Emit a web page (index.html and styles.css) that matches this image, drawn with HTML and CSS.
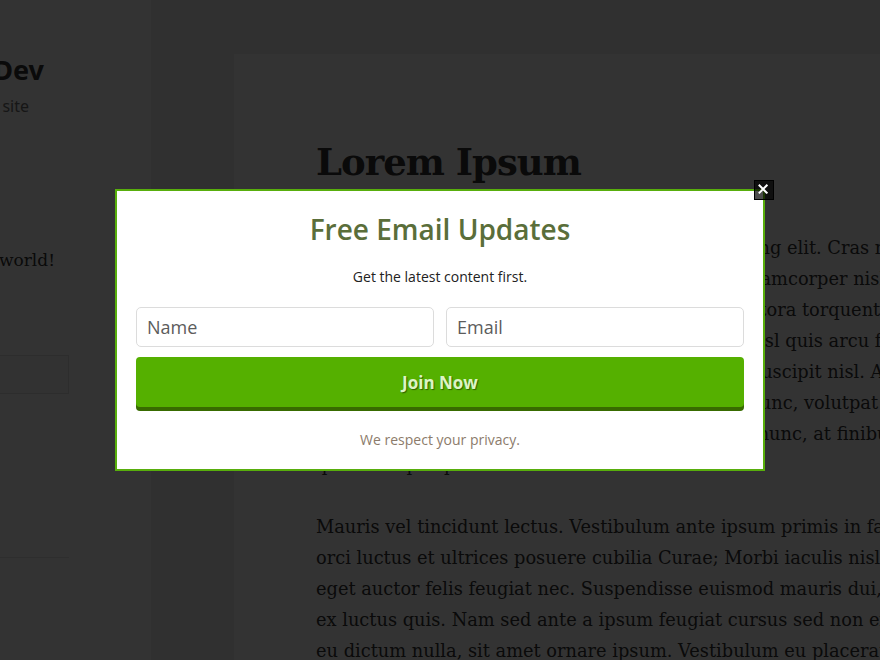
FILE: index.html
```html
<!DOCTYPE html>
<html lang="en">
<head>
<meta charset="utf-8">
<title>Lorem Ipsum</title>
<link rel="stylesheet" href="styles.css">
</head>
<body>
<div class="page">
  <aside class="sidebar">
    <div class="side-inner">
      <div class="end-row title-row"><span class="site-title">WordPress Dev</span></div>
      <div class="end-row desc-row"><span class="site-desc">Just another WordPress site</span></div>
      <div class="end-row post-row"><span class="post-link">Hello world!</span></div>
      <div class="search-box"></div>
      <div class="widget-rule"></div>
    </div>
  </aside>
  <main class="main">
    <article class="card">
      <h1 class="entry-title">Lorem Ipsum</h1>
      <p class="para">Lorem ipsum dolor sit amet, consectetur adipiscing elit. Cras nec<br>tellus in magnam facilisis tempus, Etiam vitae ullamcorper nisl quis<br>Nullam facilisis. Class aptent taciti sociosqu ad litora torquent per conubia<br>posuere dolore. Phasellus vitae est in justo non nisl quis arcu felis<br>ligula et orci. Pellentesque habitant morbi vitae suscipit nisl. Aliquam<br>vel lacus sed sapien viverra tristique, ornare at nunc, volutpat<br>dignissim est. Proin a magna sed metus porta et nunc, at finibus<br>quam tempus pharetra.</p>
      <p class="para">Mauris vel tincidunt lectus. Vestibulum ante ipsum primis in faucibus<br>orci luctus et ultrices posuere cubilia Curae; Morbi iaculis nisl et<br>eget auctor felis feugiat nec. Suspendisse euismod mauris dui, at<br>ex luctus quis. Nam sed ante a ipsum feugiat cursus sed non ex<br>eu dictum nulla, sit amet ornare ipsum. Vestibulum eu placerat</p>
    </article>
  </main>
</div>
<div class="overlay">
  <div class="modal">
    <button class="close" type="button" aria-label="Close">
      <svg viewBox="0 0 20 20" width="18" height="18"><path d="M5 5 L13 13 M13 5 L5 13" stroke="#fff" stroke-width="2.2" stroke-linecap="square" fill="none"/></svg>
    </button>
    <h2 class="modal-title">Free Email Updates</h2>
    <p class="modal-sub">Get the latest content first.</p>
    <form class="signup">
      <div class="fields">
        <input class="field" type="text" placeholder="Name">
        <input class="field" type="email" placeholder="Email">
      </div>
      <button class="join" type="button">Join Now</button>
    </form>
    <p class="privacy">We respect your privacy.</p>
  </div>
</div>
</body>
</html>
```
FILE: styles.css
```css
html, body {
  margin: 0;
  padding: 0;
  height: 100%;
  overflow: hidden;
}
body {
  background: #f1f1f1;
  color: #333;
  font-family: "DejaVu Serif", "Liberation Serif", serif;
}
.page {
  display: flex;
  min-height: 100vh;
}
.sidebar {
  width: 151px;
  flex-shrink: 0;
  background: #fff;
  overflow: hidden;
  min-height: 100vh;
}
.side-inner {
  width: 69px;
  padding-top: 53px;
}
.end-row {
  display: flex;
  justify-content: flex-end;
  white-space: nowrap;
}
.end-row > span { flex-shrink: 0; }
.title-row { padding-right: 25px; }
.desc-row { padding-right: 40px; margin-top: 9px; }
.post-row { padding-right: 14px; margin-top: 131px; }
.site-title {
  font-family: "Noto Sans", sans-serif;
  font-weight: 700;
  font-size: 27px;
  line-height: 33px;
  color: #333;
}
.site-desc {
  font-family: "Noto Sans", sans-serif;
  font-size: 16px;
  line-height: 22px;
  color: #707070;
}
.post-link {
  font-size: 17px;
  line-height: 24px;
  color: #333;
}
.search-box {
  margin-top: 83px;
  margin-left: -30px;
  height: 39px;
  box-sizing: border-box;
  background: #f7f7f7;
  border: 1px solid rgba(51, 51, 51, 0.12);
}
.widget-rule {
  margin-top: 163px;
  border-top: 1px solid rgba(51, 51, 51, 0.12);
}
.main {
  flex: 1;
  min-width: 0;
  padding: 54px 0 0 83px;
}
.card {
  background: #fff;
  overflow: hidden;
  padding: 85px 0 0 82px;
  min-height: 700px;
  white-space: nowrap;
}
.entry-title {
  margin: 0;
  font-size: 37px;
  line-height: 46px;
  letter-spacing: -1px;
  font-weight: 700;
  color: #333;
}
.para {
  margin: 47px 0 0;
  font-size: 17.8px;
  line-height: 31px;
}
.para + .para { margin-top: 31px; }

.overlay {
  position: fixed;
  inset: 0;
  background: rgba(0, 0, 0, 0.8);
  display: flex;
  align-items: center;
  justify-content: center;
}
.modal {
  position: relative;
  width: 650px;
  box-sizing: border-box;
  background: #fff;
  border: 2px solid #58ae0c;
  padding: 19px 19px 20px;
  font-family: "Open Sans", sans-serif;
  text-align: center;
}
.close {
  position: absolute;
  top: -11px;
  right: -11px;
  width: 20px;
  height: 20px;
  padding: 0;
  box-sizing: border-box;
  border: 1px solid #000;
  background: rgba(0, 0, 0, 0.7);
  display: flex;
  align-items: center;
  justify-content: center;
  cursor: pointer;
}
.close svg { display: block; }
.modal-title {
  margin: 0;
  font-size: 28px;
  line-height: 38px;
  font-weight: 600;
  color: #5a6e3a;
}
.modal-sub {
  margin: 19px 0 0;
  font-size: 14px;
  line-height: 19px;
  color: #222;
}
.signup {
  margin: 21px 0 0;
}
.fields {
  display: flex;
  gap: 12px;
}
.field {
  flex: 1;
  min-width: 0;
  height: 40px;
  box-sizing: border-box;
  border: 1px solid #dcdcdc;
  border-radius: 5px;
  padding: 0 10px;
  font-family: "Open Sans", sans-serif;
  font-size: 18px;
  color: #444;
  background: #fff;
  outline: none;
}
.field::placeholder { color: #5c5c5c; opacity: 1; }
.join {
  display: block;
  width: 100%;
  height: 50px;
  margin-top: 10px;
  border: 0;
  border-radius: 4px;
  background: #55b000;
  box-shadow: 0 4px 0 #386b00;
  font-family: "Open Sans", sans-serif;
  font-weight: 700;
  font-size: 17px;
  color: #dcf4c6;
  text-shadow: 1px 1px 1px rgba(0, 0, 0, 0.45);
  cursor: pointer;
}
.privacy {
  margin: 23px 0 0;
  font-size: 14px;
  line-height: 19px;
  color: #8c7b6b;
}
```
